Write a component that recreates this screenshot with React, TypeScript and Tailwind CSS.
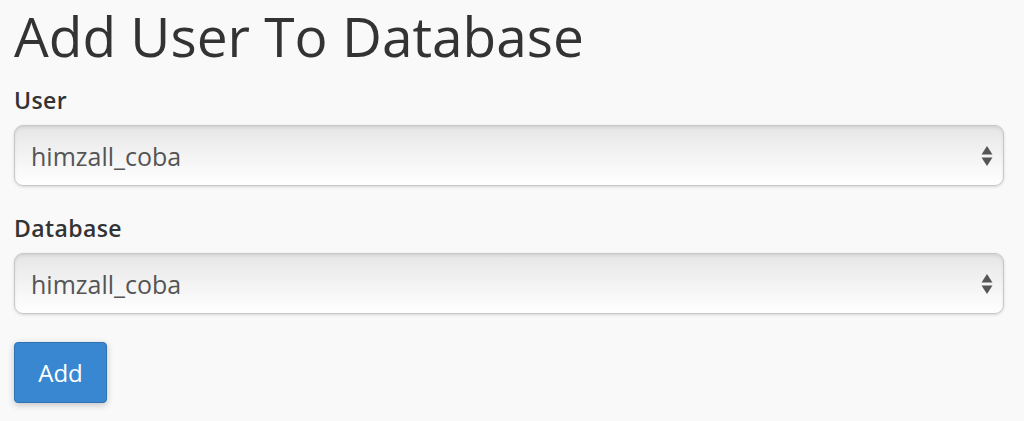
import React from 'react';

const Arrows: React.FC = () => (
    <svg width="12" height="22" viewBox="0 0 12 22" className="text-[#555]">
        <path d="M6 1 L11.5 9.5 L0.5 9.5 Z" fill="currentColor" />
        <path d="M6 21 L11.5 12.5 L0.5 12.5 Z" fill="currentColor" />
    </svg>
);

const SelectField: React.FC<{ label: string; value: string }> = ({ label, value }) => {
    return (
        <div className="flex flex-col">
            <label className="text-[23px] font-semibold tracking-[0.4px] text-[#333] leading-[23px] mb-[13px]">{label}</label>
            <div className="w-[990px] h-[61px] rounded-[9px] border border-[#c8c8c8] bg-gradient-to-b from-[#e6e6e6] via-[#f3f3f3] to-white shadow-[inset_0_2px_3px_rgba(0,0,0,0.08),0_1px_3px_rgba(0,0,0,0.14)] flex items-center justify-between pl-[16px] pr-[10px]">
                <span className="text-[25px] text-[#555] leading-[34px]">{value}</span>
                <Arrows />
            </div>
        </div>
    );
};

const App: React.FC = () => {
    return (
        <div className="w-[1024px] h-[421px] bg-[#f9f9f9] px-[14px] pt-[1px] overflow-hidden font-['Open_Sans',sans-serif]">
            <h1 className="text-[55px] leading-[76px] text-[#333] -mt-[3px] mb-[15px]">Add User To Database</h1>
            <div className="flex flex-col gap-[31px]">
                <SelectField label="User" value="himzall_coba" />
                <SelectField label="Database" value="himzall_coba" />
            </div>
            <button className="mt-[28px] w-[93px] h-[61px] rounded-[4px] bg-[#3a87d1] border border-[#2f72b4] text-white text-[24px] leading-none shadow-[0_2px_7px_rgba(0,0,0,0.22)]">
                Add
            </button>
        </div>
    );
};

export default App;
